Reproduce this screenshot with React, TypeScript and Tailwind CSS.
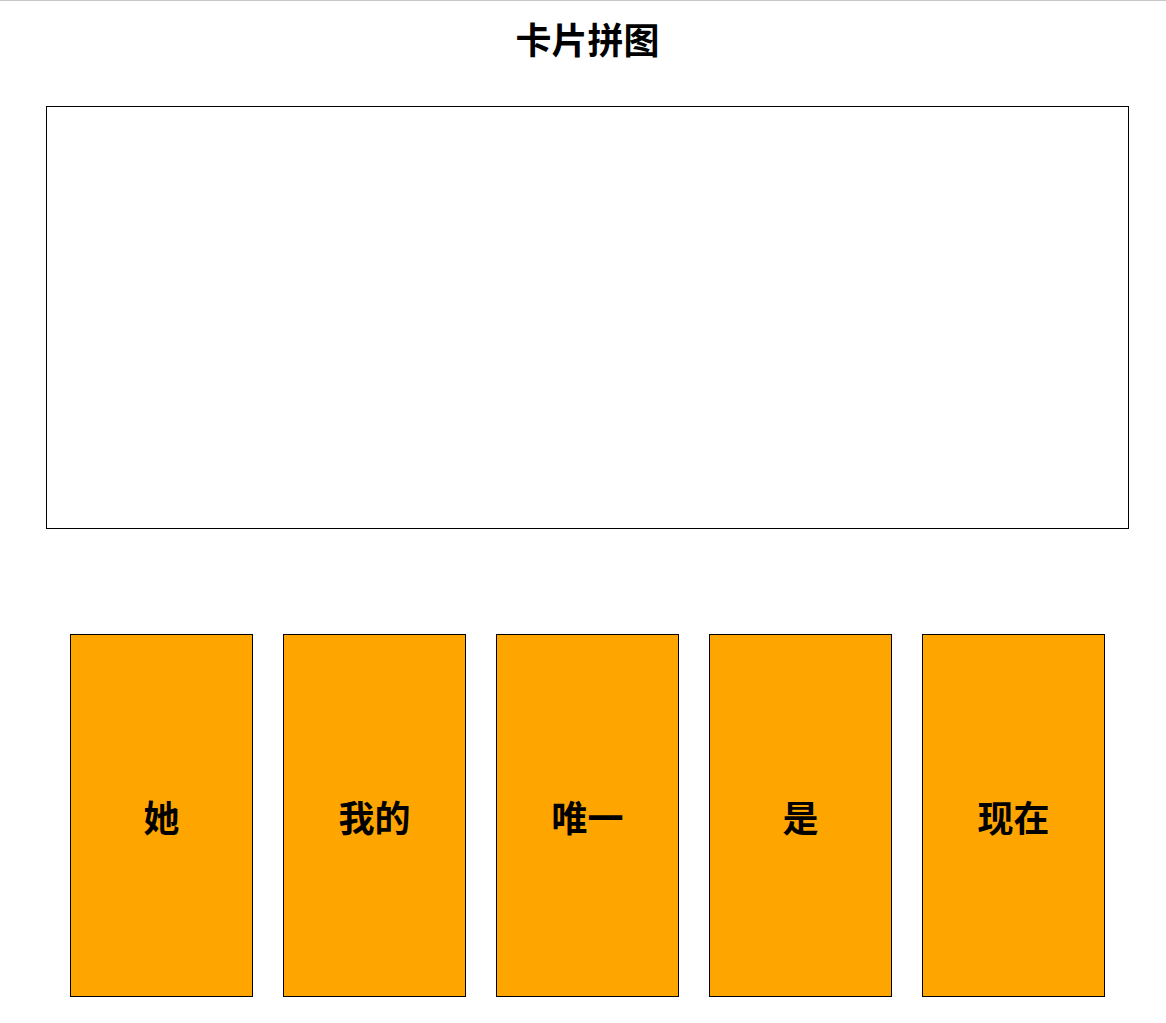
import React from 'react';

const cards = ['她', '我的', '唯一', '是', '现在'];

const App: React.FC = () => {
  return (
    <div className="min-h-screen bg-white border-t border-[#c8c8c8] text-black font-['Noto_Sans_CJK_SC','Noto_Sans',sans-serif]">
      <h1 className="text-center text-[36px] font-bold leading-[44px] pt-[15px] pl-[9px]">卡片拼图</h1>

      {/* Drop area */}
      <div className="ml-[46px] mr-[37px] mt-[46px] h-[423px] border border-black" />

      {/* Cards */}
      <div className="flex gap-[30px] pl-[70px] mt-[105px]">
        {cards.map(text => (
          <div
            key={text}
            className="w-[183px] h-[363px] shrink-0 bg-[#ffa500] border border-black flex items-center justify-center text-[36px] font-bold"
          >
            {text}
          </div>
        ))}
      </div>
    </div>
  );
};

export default App;
